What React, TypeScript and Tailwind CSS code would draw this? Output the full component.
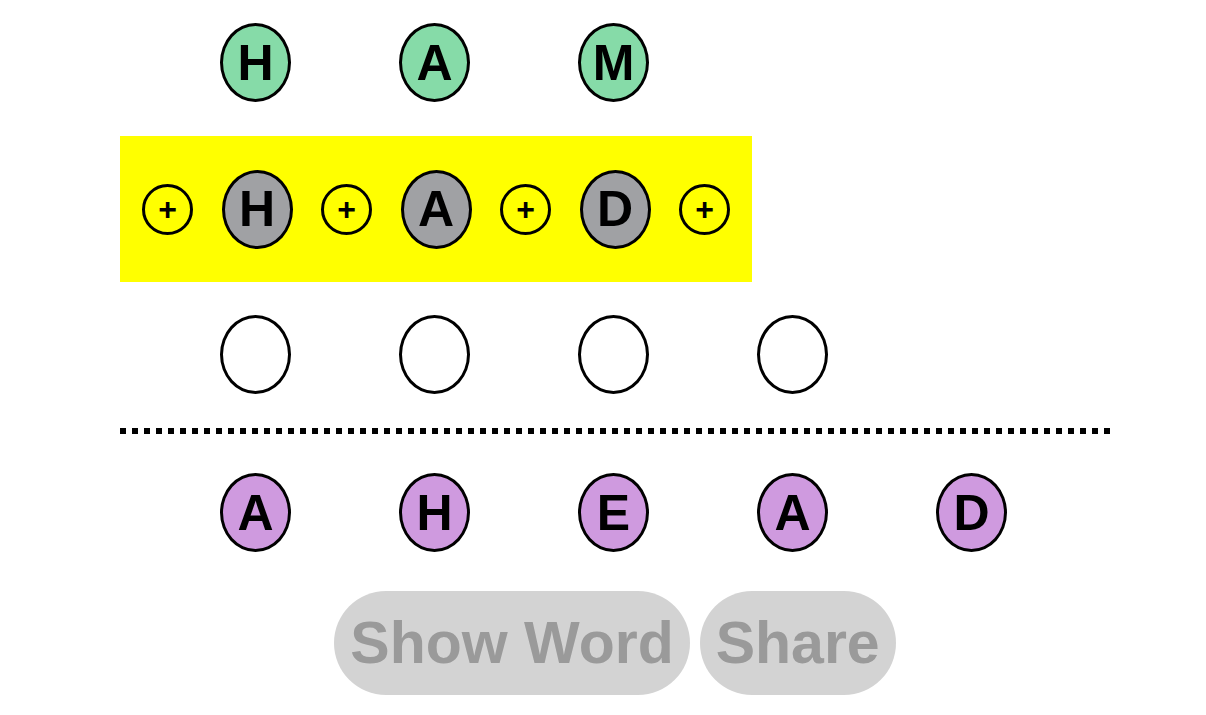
import React from "react";

type Tile = { letter?: string; tone: "green" | "gray" | "empty" | "purple" };

const toneClass: Record<Tile["tone"], string> = {
  green: "bg-[#86dba8]",
  gray: "bg-[#a0a1a4]",
  empty: "bg-white",
  purple: "bg-[#cf9adf]",
};

function Bubble({ letter, tone }: Tile) {
  return (
    <div
      className={`flex h-[79px] w-[71px] shrink-0 items-center justify-center rounded-[50%] border-[3px] border-black ${toneClass[tone]}`}
    >
      {letter && (
        <span className="text-[50px] font-bold leading-none text-black">{letter}</span>
      )}
    </div>
  );
}

function PlusSlot() {
  return (
    <button className="flex h-[51px] w-[51px] shrink-0 items-center justify-center rounded-full border-[3px] border-black bg-transparent">
      <span className="text-[32px] font-bold leading-none text-black">+</span>
    </button>
  );
}

const target = ["H", "A", "M"];
const guess = ["H", "A", "D"];
const pool = ["A", "H", "E", "A", "D"];

export default function App() {
  return (
    <div className="min-h-screen bg-white font-['Liberation_Sans',Arial,sans-serif]">
      <div className="ml-[120px] flex w-[990px] flex-col pt-[23px]">
        {/* target word */}
        <div className="flex gap-[108px] pl-[100px]">
          {target.map((l, i) => (
            <Bubble key={i} letter={l} tone="green" />
          ))}
        </div>

        {/* current guess with insert slots */}
        <div className="mt-[34px] flex h-[146px] w-[632px] items-center justify-between bg-[#ffff00] px-[22px]">
          <PlusSlot />
          {guess.map((l, i) => (
            <React.Fragment key={i}>
              <Bubble letter={l} tone="gray" />
              <PlusSlot />
            </React.Fragment>
          ))}
        </div>

        {/* next word slots */}
        <div className="mt-[33px] flex gap-[108px] pl-[100px]">
          {[0, 1, 2, 3].map((i) => (
            <Bubble key={i} tone="empty" />
          ))}
        </div>

        <div className="mt-[34px] h-[6px] w-[991px] bg-[repeating-linear-gradient(to_right,#000_0_6px,transparent_6px_12px)]" />

        {/* letter pool */}
        <div className="mt-[39px] flex gap-[108px] pl-[100px]">
          {pool.map((l, i) => (
            <Bubble key={i} letter={l} tone="purple" />
          ))}
        </div>

        <div className="mt-[39px] flex justify-center gap-[10px]">
          <button
            disabled
            className="h-[104px] rounded-full bg-[#d3d3d3] px-[16px] text-[59px] font-bold text-[#9a9a9a]"
          >
            Show Word
          </button>
          <button
            disabled
            className="h-[104px] rounded-full bg-[#d3d3d3] px-[16px] text-[59px] font-bold text-[#9a9a9a]"
          >
            Share
          </button>
        </div>
      </div>
    </div>
  );
}
